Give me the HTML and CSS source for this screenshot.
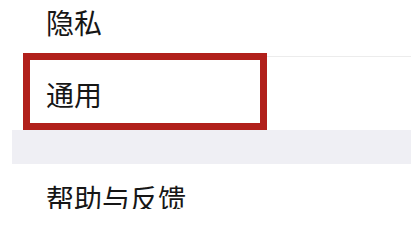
FILE: index.html
```html
<!DOCTYPE html>
<html lang="zh-CN">
<head>
<meta charset="utf-8">
<link rel="stylesheet" href="styles.css">
</head>
<body>
<div class="list">
  <div class="row row-first"><span class="label">隐私</span></div>
  <div class="row row-mid"><span class="label">通用</span></div>
  <div class="gap"></div>
  <div class="row row-last"><span class="label">帮助与反馈</span></div>
  <div class="highlight"></div>
</div>
</body>
</html>
```
FILE: styles.css
```css
html, body {
  margin: 0;
  padding: 0;
  background: #ffffff;
  overflow: hidden;
}
.list {
  position: relative;
  width: 411px;
  height: 209px;
  overflow: hidden;
  font-family: "Noto Sans CJK SC", "Noto Sans", sans-serif;
  color: #161616;
}
.row {
  height: 73px;
  display: flex;
  align-items: center;
  padding-left: 46px;
  box-sizing: border-box;
}
.row-first {
  height: 57px;
  padding-bottom: 14px;
  position: relative;
}
.row-first::after {
  content: "";
  position: absolute;
  left: 46px;
  right: 0;
  bottom: 0;
  height: 1px;
  background: #ececec;
}
.row-last {
  padding-bottom: 6px;
}
.label {
  font-size: 28px;
  line-height: 1;
}
.gap {
  height: 34px;
  margin-left: 12px;
  background: #efeff4;
}
.highlight {
  position: absolute;
  left: 23px;
  top: 53px;
  width: 244px;
  height: 77px;
  box-sizing: border-box;
  border: 7.5px solid #b1201b;
}
```
